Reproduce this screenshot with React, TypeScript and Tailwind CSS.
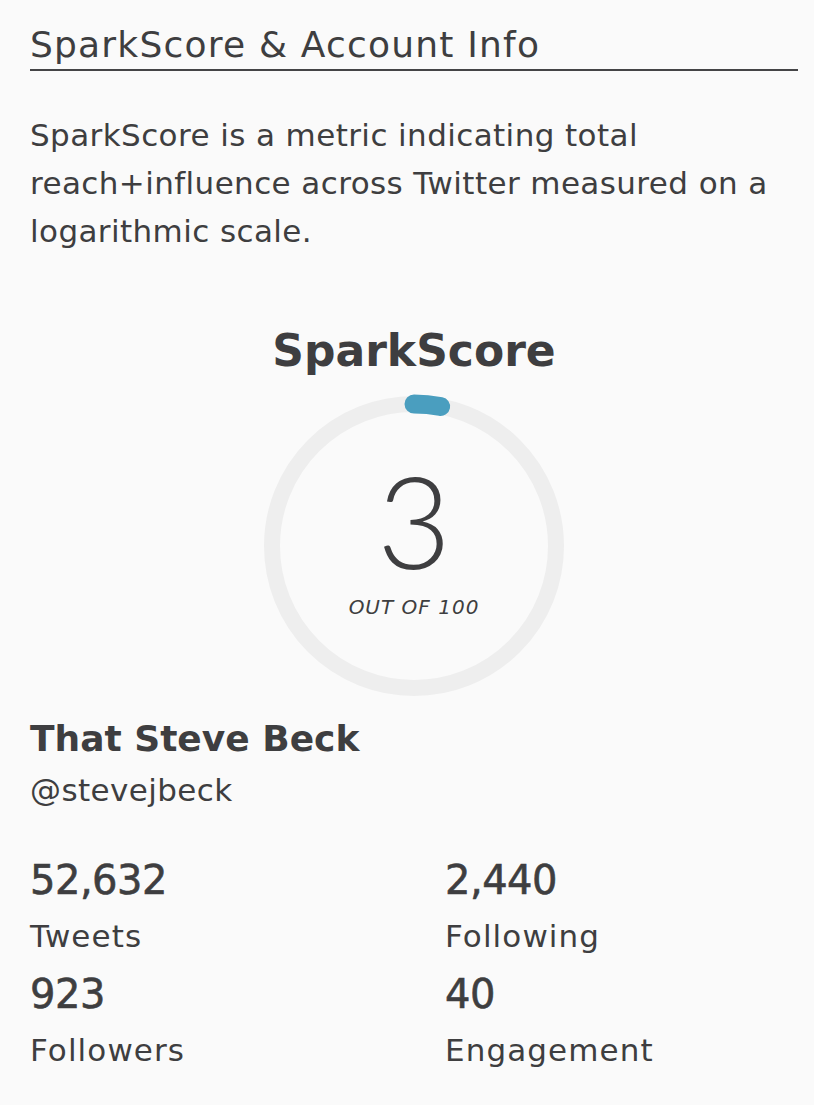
const stats = [
  { value: "52,632", label: "Tweets" },
  { value: "2,440", label: "Following" },
  { value: "923", label: "Followers" },
  { value: "40", label: "Engagement" },
];

const font = { fontFamily: '"DejaVu Sans", "Noto Sans", sans-serif' };
const thin = { fontFamily: 'Lato, "DejaVu Sans", sans-serif' };

function ScoreRing({ score }: { score: number }) {
  const r = 142;
  const c = 2 * Math.PI * r;
  const arc = (score / 100) * c;

  return (
    <div className="relative h-[300px] w-[300px]">
      <svg width="300" height="300" viewBox="0 0 300 300" className="-rotate-90 overflow-visible">
        <circle cx="150" cy="150" r={r} fill="none" stroke="#eeeeee" strokeWidth="16" />
        <circle
          cx="150"
          cy="150"
          r={r}
          fill="none"
          stroke="#4a9ebf"
          strokeWidth="19"
          strokeLinecap="round"
          strokeDasharray={`${arc} ${c}`}
        />
      </svg>
      <div className="absolute inset-0 flex flex-col items-center pt-[60px]">
        <span className="text-[128px] font-light leading-none" style={thin}>{score}</span>
        <span className="mt-[13px] text-[20px] italic leading-none tracking-[1px]">OUT OF 100</span>
      </div>
    </div>
  );
}

export default function App() {
  return (
    <div className="min-h-[1105px] w-[814px] bg-[#fafafa] text-[#3e3e40]" style={font}>
      <div className="pl-[30px] pr-[16px] pt-[23px]">
        <h1 className="border-b-2 border-[#444446] pb-[2px] text-[36px] leading-[44px] tracking-[1.2px]">
          SparkScore &amp; Account Info
        </h1>

        <p className="mt-[40px] text-[31px] leading-[48px] tracking-[0.4px]">
          SparkScore is a metric indicating total reach+influence across Twitter measured on a logarithmic scale.
        </p>

        <div className="mt-[68px] flex flex-col items-center">
          <h2 className="text-[44px] font-semibold leading-[56px]">SparkScore</h2>
          <div className="mt-[17px]">
            <ScoreRing score={3} />
          </div>
        </div>

        <div className="mt-[18px]">
          <p className="text-[36px] font-semibold leading-[50px]">That Steve Beck</p>
          <p className="mt-[4px] text-[31px] leading-[44px] tracking-[0.4px]">@stevejbeck</p>
        </div>

        <div className="mt-[40px] grid grid-cols-[415px_1fr] gap-y-[2px]">
          {stats.map((s) => (
            <div key={s.label} className="flex flex-col">
              <span className="text-[40px] font-medium leading-[56px] tracking-[-0.5px] [-webkit-text-stroke:0.6px_#3e3e40]">
                {s.value}
              </span>
              <span className="text-[31px] leading-[56px] tracking-[1.1px]">{s.label}</span>
            </div>
          ))}
        </div>
      </div>
    </div>
  );
}
